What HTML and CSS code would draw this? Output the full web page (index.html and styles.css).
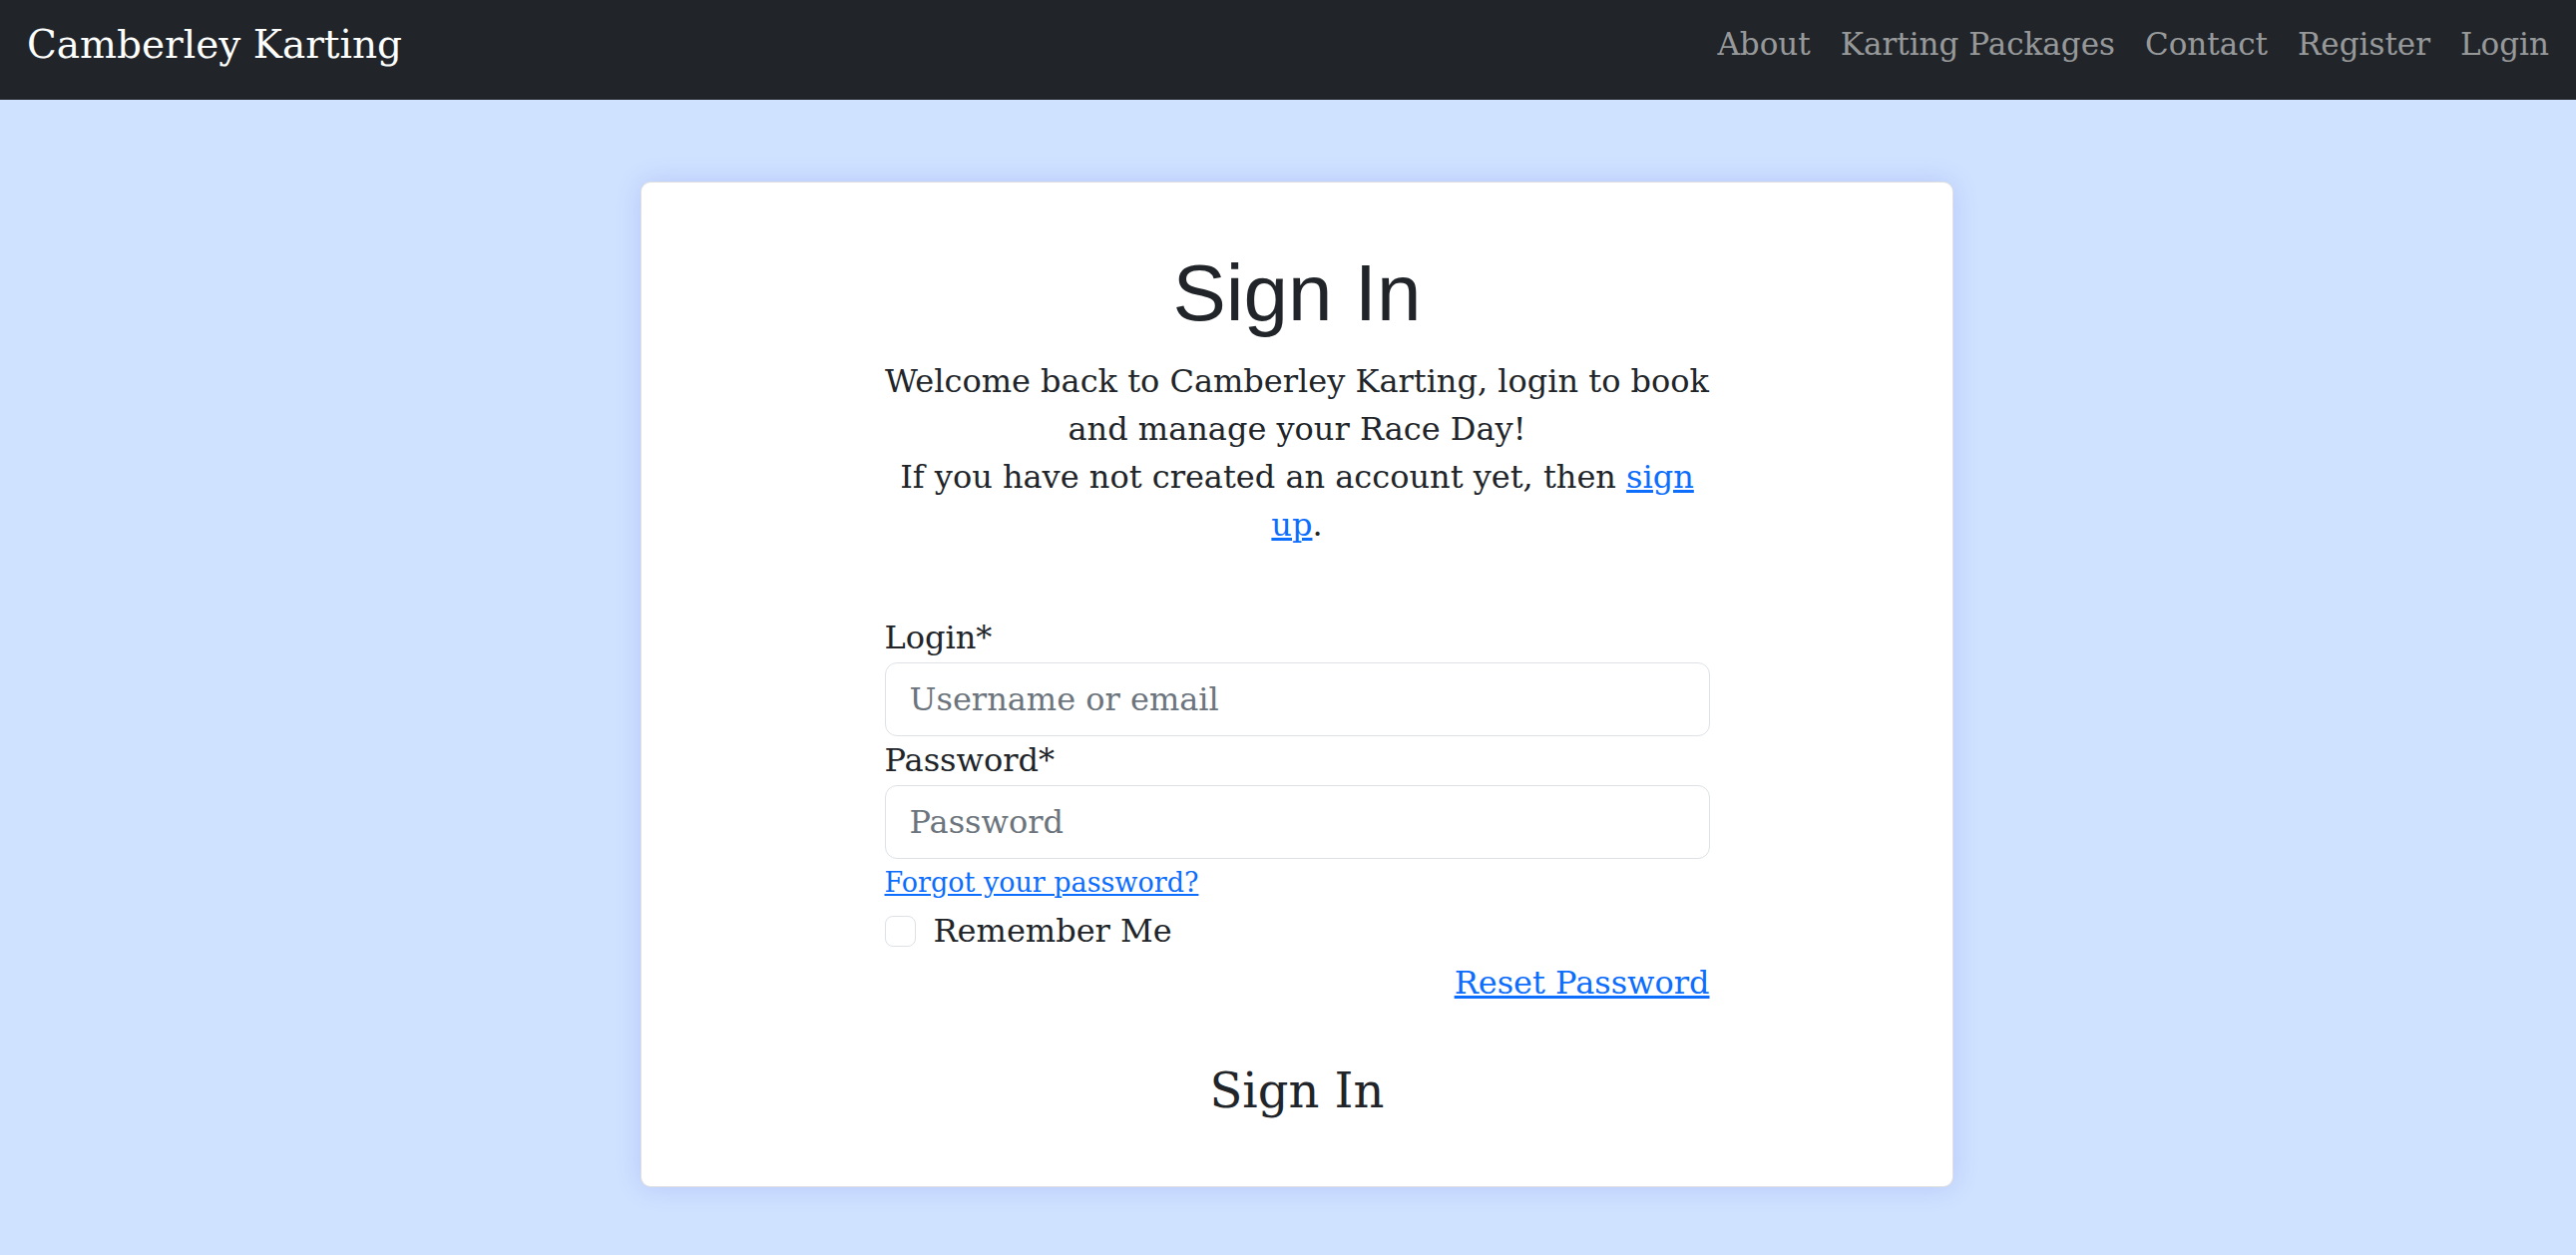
FILE: index.html
```html
<!DOCTYPE html>
<html lang="en">
<head>
<meta charset="utf-8">
<title>Sign In - Camberley Karting</title>
<link rel="stylesheet" href="styles.css">
</head>
<body>
<nav class="navbar">
  <a class="brand" href="#">Camberley Karting</a>
  <ul class="nav-links">
    <li><a href="#">About</a></li>
    <li><a href="#">Karting Packages</a></li>
    <li><a href="#">Contact</a></li>
    <li><a href="#">Register</a></li>
    <li><a href="#">Login</a></li>
  </ul>
</nav>
<main class="page">
  <section class="card">
    <h1 class="title">Sign In</h1>
    <p class="intro">Welcome back to Camberley Karting, login to book and manage your Race Day!<br>If you have not created an account yet, then <a href="#">sign up</a>.</p>
    <form class="login-form">
      <label class="field-label" for="login">Login*</label>
      <input class="field-input" id="login" type="text" placeholder="Username or email">
      <label class="field-label" for="password">Password*</label>
      <input class="field-input" id="password" type="password" placeholder="Password">
      <a class="forgot" href="#">Forgot your password?</a>
      <div class="remember">
        <input class="check" id="remember" type="checkbox">
        <label for="remember">Remember Me</label>
      </div>
      <div class="reset-row"><a href="#">Reset Password</a></div>
      <button class="submit" type="button">Sign In</button>
    </form>
  </section>
</main>
</body>
</html>
```
FILE: styles.css
```css
* { box-sizing: border-box; }

html, body {
  margin: 0;
  padding: 0;
}

body {
  background: #cfe2ff;
  font-family: "DejaVu Serif", "Liberation Serif", serif;
  font-size: 32px;
  line-height: 48px;
  color: #212529;
  min-height: 1258px;
}

a { color: #0d6efd; }

.navbar {
  height: 100px;
  background: #212529;
  display: flex;
  align-items: flex-start;
  justify-content: space-between;
  padding: 0 27px 0 27px;
}

.brand {
  color: #ffffff;
  text-decoration: none;
  font-size: 39px;
  line-height: 60px;
  margin-top: 15px;
}

.nav-links {
  list-style: none;
  margin: 20px 0 0;
  padding: 0;
  display: flex;
  gap: 30px;
}

.nav-links a {
  color: rgba(255, 255, 255, 0.55);
  text-decoration: none;
  display: block;
  font-size: 31px;
}

.page {
  padding: 82px 0 0 18px;
}

.card {
  width: 1316px;
  margin: 0 auto;
  background: #ffffff;
  border: 1px solid rgba(0, 0, 0, 0.12);
  border-radius: 10px;
  box-shadow: 0 0 26px rgba(90, 90, 230, 0.2);
  padding: 63px 0 60px;
  display: flex;
  flex-direction: column;
  align-items: center;
}

.title {
  margin: 0 0 16px;
  font-family: "Liberation Sans", Arial, sans-serif;
  font-weight: 400;
  font-size: 80px;
  line-height: 96px;
}

.intro {
  width: 827px;
  margin: 0 0 65px;
  text-align: center;
}

.login-form {
  width: 827px;
  display: flex;
  flex-direction: column;
}

.field-label {
  display: block;
  margin-bottom: 1px;
}

.field-input {
  display: block;
  width: 100%;
  height: 74px;
  padding: 12px 24px;
  font-family: inherit;
  font-size: 32px;
  line-height: 48px;
  color: #212529;
  border: 1px solid #dee2e6;
  border-radius: 12px;
  background: #fff;
}

.field-input::placeholder {
  color: #6c757d;
}

.forgot {
  align-self: flex-start;
  font-size: 27px;
}

.remember {
  display: flex;
  align-items: center;
  height: 48px;
}

.check {
  appearance: none;
  -webkit-appearance: none;
  width: 31px;
  height: 31px;
  margin: 0 18px 0 0;
  border: 1px solid #dee2e6;
  border-radius: 8px;
  background: #fff;
}

.reset-row {
  margin-top: 4px;
  text-align: right;
}

.submit {
  margin-top: 48px;
  background: transparent;
  border: none;
  padding: 0;
  font-family: inherit;
  font-size: 48px;
  line-height: 72px;
  color: #212529;
  text-align: center;
}
```
